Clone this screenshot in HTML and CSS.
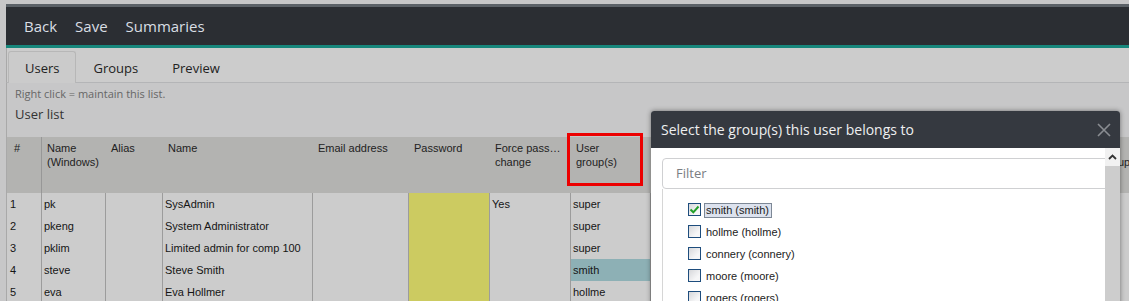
FILE: index.html
```html
<!DOCTYPE html>
<html>
<head>
<meta charset="utf-8">
<link rel="stylesheet" href="styles.css">
</head>
<body>
<div class="app">
  <div class="topbar">
    <span class="menu-item">Back</span>
    <span class="menu-item">Save</span>
    <span class="menu-item">Summaries</span>
  </div>
  <div class="tabs">
    <div class="tab active">Users</div>
    <div class="tab">Groups</div>
    <div class="tab">Preview</div>
  </div>
  <div class="content">
    <div class="hint">Right click = maintain this list.</div>
    <div class="list-title">User list</div>
    <div class="grid">
      <div class="row head">
        <div class="hc num">#</div>
        <div class="hc"><div>Name</div><div>(Windows)</div></div>
        <div class="hc">Alias</div>
        <div class="hc">Name</div>
        <div class="hc">Email address</div>
        <div class="hc">Password</div>
        <div class="hc"><div class="ell">Force password</div><div>change</div></div>
        <div class="hc"><div>User</div><div>group(s)</div></div>
        <div class="hc">Language</div>
        <div class="hc">Start menu</div>
        <div class="hc">Home page</div>
        <div class="hc"><div>In</div><div>group</div></div>
      </div>
      <div class="row">
        <div class="c">1</div><div class="c">pk</div><div class="c"></div><div class="c">SysAdmin</div><div class="c"></div><div class="c pw"></div><div class="c">Yes</div><div class="c">super</div><div class="c"></div><div class="c"></div><div class="c"></div><div class="c"></div>
      </div>
      <div class="row">
        <div class="c">2</div><div class="c">pkeng</div><div class="c"></div><div class="c">System Administrator</div><div class="c"></div><div class="c pw"></div><div class="c"></div><div class="c">super</div><div class="c"></div><div class="c"></div><div class="c"></div><div class="c"></div>
      </div>
      <div class="row">
        <div class="c">3</div><div class="c">pklim</div><div class="c"></div><div class="c">Limited admin for comp 100</div><div class="c"></div><div class="c pw"></div><div class="c"></div><div class="c">super</div><div class="c"></div><div class="c"></div><div class="c"></div><div class="c"></div>
      </div>
      <div class="row">
        <div class="c">4</div><div class="c">steve</div><div class="c"></div><div class="c">Steve Smith</div><div class="c"></div><div class="c pw"></div><div class="c"></div><div class="c sel">smith</div><div class="c"></div><div class="c"></div><div class="c"></div><div class="c"></div>
      </div>
      <div class="row">
        <div class="c">5</div><div class="c">eva</div><div class="c"></div><div class="c">Eva Hollmer</div><div class="c"></div><div class="c pw"></div><div class="c"></div><div class="c">hollme</div><div class="c"></div><div class="c"></div><div class="c"></div><div class="c"></div>
      </div>
    </div>
  </div>
</div>

<div class="annot"></div>

<div class="dialog">
  <div class="dlg-head">
    <span class="dlg-title">Select the group(s) this user belongs to</span>
    <svg class="dlg-close" width="14" height="14" viewBox="0 0 14 14"><path d="M1 1 L13 13 M13 1 L1 13" stroke="#8a8d92" stroke-width="1.6" fill="none"/></svg>
  </div>
  <div class="dlg-body">
    <div class="dlg-scroll">
      <div class="filter">Filter</div>
      <div class="checklist">
        <div class="item"><span class="cb"><svg width="11" height="11" viewBox="0 0 11 11"><path d="M1.5 5.5 L4.3 8.3 L9.5 2.5" stroke="#23a02a" stroke-width="2" fill="none"/></svg></span><span class="lbl focus">smith (smith)</span></div>
        <div class="item"><span class="cb"></span><span class="lbl">hollme (hollme)</span></div>
        <div class="item"><span class="cb"></span><span class="lbl">connery (connery)</span></div>
        <div class="item"><span class="cb"></span><span class="lbl">moore (moore)</span></div>
        <div class="item"><span class="cb"></span><span class="lbl">rogers (rogers)</span></div>
      </div>
    </div>
    <div class="sbar">
      <div class="sbtn"><svg width="15" height="18" viewBox="0 0 15 18"><path d="M4 11 L7.5 7.5 L11 11" stroke="#333" stroke-width="1.8" fill="none"/></svg></div>
    </div>
  </div>
</div>
</body>
</html>
```
FILE: styles.css
```css
html, body {
  margin: 0;
  padding: 0;
  overflow: hidden;
  background: #c7c7c8;
  width: 1129px;
  height: 301px;
}
.app {
  margin-left: 6px;
  padding-top: 4px;
  overflow: hidden;
  height: 297px;
}
.topbar {
  border-top: 3px solid #5b6167;
  border-bottom: 3px solid #17877c;
  background: #2b2e33;
  height: 38px;
  display: flex;
  align-items: center;
  padding-left: 18px;
  gap: 18px;
  font-family: "Open Sans", "Noto Sans", sans-serif;
  font-size: 15px;
  color: #d9dee4;
}
.tabs {
  display: flex;
  align-items: flex-end;
  height: 34px;
  border-bottom: 1px solid #b4b5b7;
  border-left: 1px solid #a9a9a9;
  background: #cccccc;
  padding-left: 1px;
  gap: 0;
  font-family: "Open Sans", "Noto Sans", sans-serif;
  font-size: 13px;
  color: #222;
}
.tab {
  height: 32px;
  box-sizing: border-box;
  line-height: 32px;
  padding: 0 16px;
  margin-bottom: -1px;
  border: 1px solid transparent;
  border-bottom: none;
}
.tab.active {
  background: #cbcbcb;
  border-color: #b7b7b7;
  border-radius: 3px 3px 0 0;
}
.content {
  border-left: 1px solid #a9a9a9;
  padding-top: 4px;
  height: 220px;
}
.hint {
  padding-left: 8px;
  font-family: "Open Sans", "Noto Sans", sans-serif;
  font-size: 11px;
  line-height: 13px;
  color: #666;
}
.list-title {
  padding-left: 8px;
  margin-top: 5px;
  font-family: "Open Sans", "Noto Sans", sans-serif;
  font-size: 13px;
  line-height: 18px;
  color: #333;
}
.grid {
  margin-top: 14px;
  width: 1400px;
  font-family: "Liberation Sans", Arial, sans-serif;
  font-size: 11px;
  color: #151515;
}
.row {
  display: grid;
  grid-template-columns: 35px 64px 57px 150px 96px 81px 81px 80px 110px 140px 196px 300px;
  height: 22px;
}
.row.head {
  height: 56px;
  background: #b3b3b1;
  color: #222;
}
.hc {
  padding: 4px 5px 0 5px;
  line-height: 14px;
  white-space: nowrap;
  overflow: hidden;
}
.hc.num {
  border-right: 1px solid #979797;
  padding-left: 7px;
}
.ell {
  overflow: hidden;
  text-overflow: ellipsis;
}
.c {
  background: #cccccc;
  border-right: 1px solid #9c9c9c;
  line-height: 22px;
  padding-left: 2px;
  white-space: nowrap;
  overflow: hidden;
}
.c:first-child {
  padding-left: 3px;
}
.c.pw {
  background: #cccb61;
}
.c.sel {
  background: #8db0b5;
}
.annot {
  position: absolute;
  left: 567px;
  top: 133px;
  width: 76px;
  height: 53px;
  box-sizing: border-box;
  border: 3px solid #ec0000;
}
.dialog {
  position: absolute;
  left: 651px;
  top: 111px;
  width: 469px;
  height: 200px;
  background: #fff;
  border-radius: 3px 3px 0 0;
  box-shadow: 0 0 5px rgba(0, 0, 0, 0.45);
  overflow: hidden;
  display: flex;
  flex-direction: column;
  z-index: 5;
}
.dlg-head {
  height: 37px;
  background: #353940;
  display: flex;
  align-items: center;
  justify-content: space-between;
  padding: 0 9px 0 10px;
  flex-shrink: 0;
}
.dlg-title {
  font-family: "Open Sans", "Noto Sans", sans-serif;
  font-size: 14px;
  color: #eeeff0;
}
.dlg-close {
  display: block;
}
.dlg-body {
  flex: 1;
  display: flex;
}
.dlg-scroll {
  flex: 1;
  overflow: hidden;
  padding: 10px 0 0 11px;
}
.filter {
  width: 460px;
  height: 31px;
  box-sizing: border-box;
  border: 1px solid #cfd0d2;
  border-radius: 4px;
  padding-left: 13px;
  line-height: 29px;
  font-family: "Open Sans", "Noto Sans", sans-serif;
  font-size: 13px;
  color: #7a7d82;
}
.checklist {
  border-left: 1px solid #d6d6d6;
  padding: 10px 0 0 25px;
  height: 120px;
  font-family: "Liberation Sans", Arial, sans-serif;
  font-size: 11px;
  color: #222;
}
.item {
  height: 22px;
  display: flex;
  align-items: center;
}
.cb {
  width: 13px;
  height: 13px;
  box-sizing: border-box;
  border: 1px solid #1e4d7d;
  background: linear-gradient(135deg, #d6d7da, #f6f6f7 70%);
  display: flex;
  align-items: center;
  justify-content: center;
  margin-top: -1px;
}
.cb svg {
  display: block;
}
.lbl {
  margin-left: 3px;
  padding: 0 2px 0 1px;
  border: 1px solid transparent;
  line-height: 13px;
}
.lbl.focus {
  background: #dce2ee;
  border-color: #7d8896;
}
.sbar {
  width: 15px;
  background: #cdcdcd;
  flex-shrink: 0;
}
.sbtn {
  height: 18px;
  background: #f1f1f1;
}
.sbtn svg {
  display: block;
}
```
